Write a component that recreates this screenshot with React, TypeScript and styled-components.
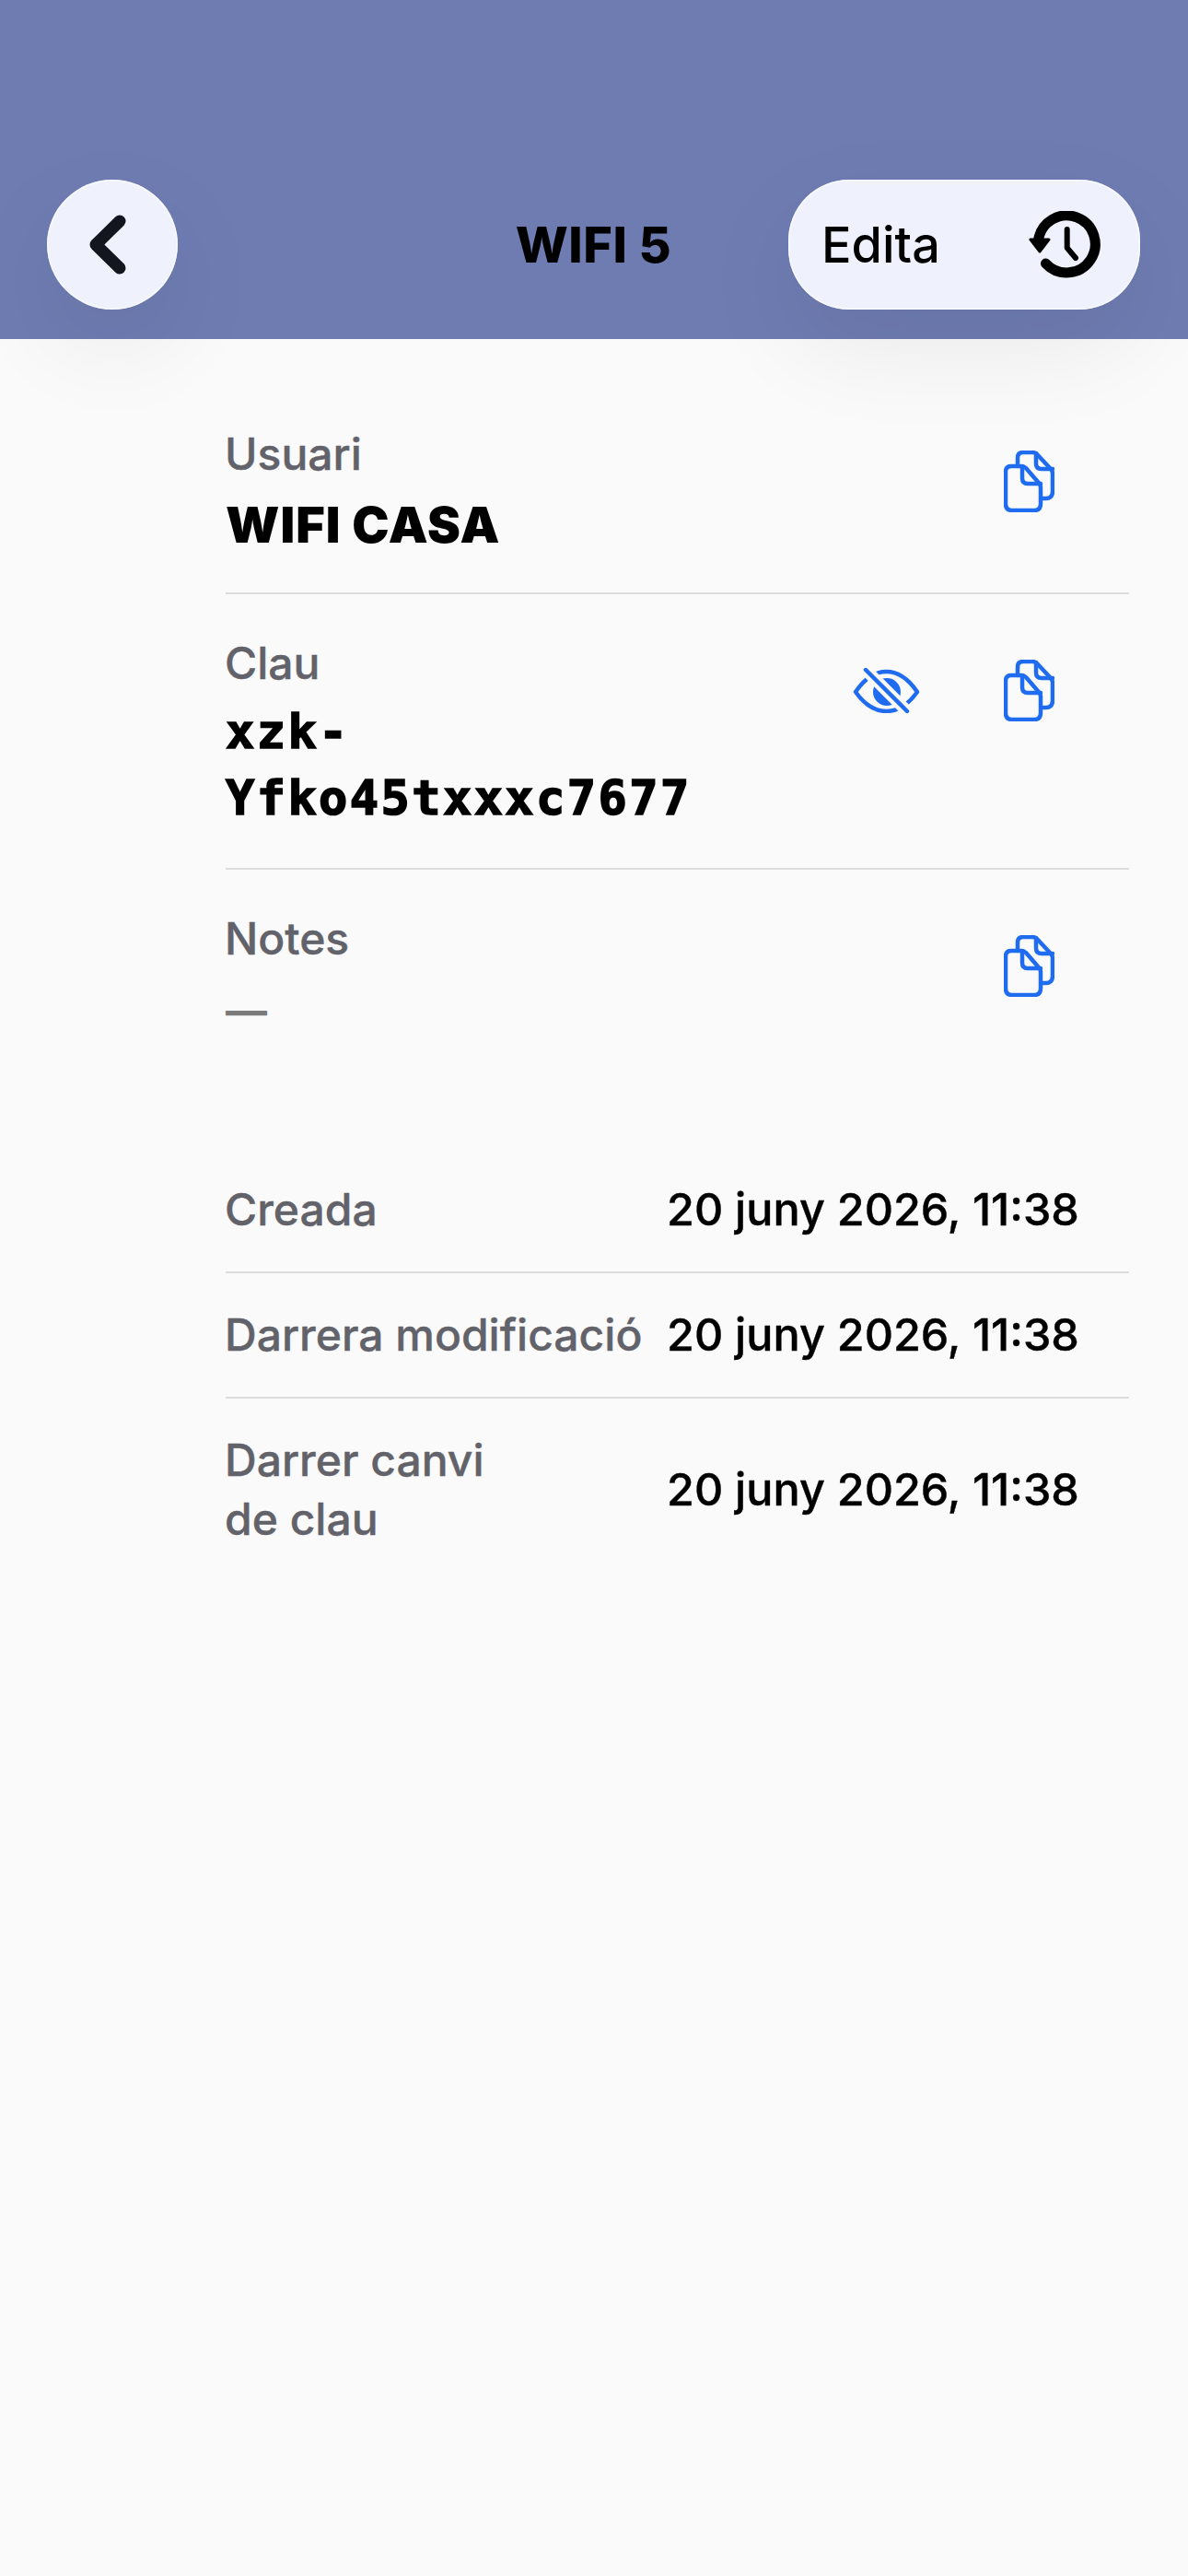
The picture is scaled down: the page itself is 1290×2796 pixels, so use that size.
import styled, { createGlobalStyle } from 'styled-components'

const GlobalStyle = createGlobalStyle`
    html, body {
        margin: 0;
        padding: 0;
        background: #fafafa;
    }
    * {
        box-sizing: border-box;
    }
`

function BackIcon() {
    return (
        <BackSvg viewBox="0 0 40 65">
            <path d="M33 7 L7 32.5 L33 58" />
        </BackSvg>
    )
}

function HistoryIcon() {
    return (
        <HistorySvg viewBox="0 0 80 74">
            <path d="M10.5 32 A31 31 0 1 1 18.5 57" className="ring" />
            <path d="M2 31 L22 31 L12 44 Z" className="arrow" />
            <path d="M41.7 20 V40 L51 51" className="hands" />
        </HistorySvg>
    )
}

function CopyIcon() {
    return (
        <IconSvg viewBox="0 0 55 67" width="55" height="67">
            <path d="M15 17 V8 Q15 2 21 2 H31 Q34 2 36 4 L50 19 Q53 22 53 25 V44 Q53 52 46 52 H41" />
            <path d="M35 3 V14 Q35 20 41 20 H53" />
            <path d="M8 17 H19 Q22 17 24 19 L37 34 Q40 37 40 40 V58 Q40 65 33 65 H9 Q2 65 2 58 V23 Q2 17 8 17 Z" />
            <path d="M20 17 V30 Q20 36 26 36 H40" />
        </IconSvg>
    )
}

function EyeOffIcon() {
    return (
        <IconSvg viewBox="0 0 73 49" width="73" height="49">
            <path d="M3 26 Q18 4 36.5 4 Q55 4 70 26 Q55 47 36.5 47 Q18 47 3 26 Z" />
            <circle cx="37" cy="26" r="15" className="solid" />
            <path d="M14 2 L59 47" className="gap" />
            <path d="M14 2 L59 47" />
        </IconSvg>
    )
}

export default function App() {
    return (
        <>
            <GlobalStyle />
            <Page>
                <Header>
                    <BackButton>
                        <BackIcon />
                    </BackButton>
                    <Title>WIFI 5</Title>
                    <EditButton>
                        <span>Edita</span>
                        <HistoryIcon />
                    </EditButton>
                </Header>

                <Content>
                    <FieldRow>
                        <div>
                            <FieldLabel>Usuari</FieldLabel>
                            <UserValue>WIFI CASA</UserValue>
                        </div>
                        <Actions>
                            <CopyIcon />
                        </Actions>
                    </FieldRow>

                    <FieldRow>
                        <div>
                            <FieldLabel>Clau</FieldLabel>
                            <SecretValue>
                                xzk-
                                <br />
                                Yfko45txxxc7677
                            </SecretValue>
                        </div>
                        <Actions>
                            <EyeOffIcon />
                            <CopyIcon />
                        </Actions>
                    </FieldRow>

                    <FieldRow $last>
                        <div>
                            <FieldLabel>Notes</FieldLabel>
                            <EmptyValue>—</EmptyValue>
                        </div>
                        <Actions>
                            <CopyIcon />
                        </Actions>
                    </FieldRow>

                    <DatesTable>
                        <DateRow>
                            <FieldLabel>Creada</FieldLabel>
                            <DateValue>20 juny 2026, 11:38</DateValue>
                        </DateRow>
                        <DateRow>
                            <FieldLabel>Darrera modificació</FieldLabel>
                            <DateValue>20 juny 2026, 11:38</DateValue>
                        </DateRow>
                        <DateRow $last>
                            <FieldLabel>
                                Darrer canvi
                                <br />
                                de clau
                            </FieldLabel>
                            <DateValue>20 juny 2026, 11:38</DateValue>
                        </DateRow>
                    </DatesTable>
                </Content>
            </Page>
        </>
    )
}

const Page = styled.div`
    width: 1290px;
    height: 2796px;
    overflow: hidden;
    background: #fafafa;
    font-family: Inter, 'Liberation Sans', sans-serif;
    color: #000;
`
const Header = styled.header`
    height: 368px;
    padding: 195px 52px 0 51px;
    display: grid;
    grid-template-columns: 1fr auto 1fr;
    align-items: start;
    background: #6f7cb2;
`
const BackButton = styled.div`
    width: 142px;
    height: 141px;
    border-radius: 50%;
    display: flex;
    align-items: center;
    justify-content: center;
    padding-right: 11px;
    background: #eff2fc;
    box-shadow: inset 0 0 0 1.5px rgba(255, 255, 255, 0.6),
        0 40px 110px rgba(0, 0, 0, 0.07);
`
const BackSvg = styled.svg`
    width: 40px;
    height: 65px;
    fill: none;
    stroke: #14161f;
    stroke-width: 13;
    stroke-linecap: round;
    stroke-linejoin: round;
`
const Title = styled.h1`
    margin: 0;
    height: 141px;
    line-height: 141px;
    font-size: 54px;
    font-weight: 800;
    letter-spacing: 0.5px;
`
const EditButton = styled.div`
    justify-self: end;
    width: 382px;
    height: 141px;
    padding: 0 41px 0 36px;
    border-radius: 66px;
    display: flex;
    align-items: center;
    justify-content: space-between;
    background: #eff2fc;
    box-shadow: inset 0 0 0 1.5px rgba(255, 255, 255, 0.6),
        0 40px 110px rgba(0, 0, 0, 0.07);
    font-size: 54px;
    font-weight: 500;
`
const HistorySvg = styled.svg`
    width: 80px;
    height: 74px;
    fill: none;
    stroke: #000;
    .ring {
        stroke-width: 11;
        stroke-linecap: round;
    }
    .arrow {
        fill: #000;
        stroke-width: 3;
        stroke-linejoin: round;
    }
    .hands {
        stroke-width: 6;
        stroke-linecap: round;
        stroke-linejoin: round;
    }
`
const Content = styled.main`
    padding: 50px 64px 0 245px;
`
const FieldRow = styled.section<{ $last?: boolean }>`
    display: flex;
    align-items: flex-start;
    justify-content: space-between;
    padding: 43px 81px 41px 0;
    border-bottom: ${(p) => (p.$last ? 'none' : '2px solid #dcdcdc')};
`
const FieldLabel = styled.div`
    margin-left: -1px;
    font-size: 48px;
    font-weight: 500;
    line-height: 64px;
    color: #62626a;
    white-space: nowrap;
    -webkit-text-stroke: 0.4px #62626a;
`
const UserValue = styled.div`
    margin-top: 9px;
    margin-bottom: -4px;
    font-size: 54px;
    font-weight: 900;
    line-height: 72px;
    letter-spacing: 1px;
`
const SecretValue = styled.div`
    margin-top: 6px;
    margin-bottom: -1px;
    font-family: 'DejaVu Sans Mono', 'Liberation Mono', monospace;
    font-size: 52px;
    font-weight: 700;
    line-height: 72px;
    letter-spacing: 2.4px;
    -webkit-text-stroke: 1.6px #000;
`
const EmptyValue = styled.div`
    margin-top: 10px;
    font-size: 45px;
    font-weight: 700;
    line-height: 72px;
    color: #7a7a7a;
`
const Actions = styled.div`
    display: flex;
    align-items: center;
    gap: 91px;
    padding-top: 28px;
`
const IconSvg = styled.svg`
    fill: none;
    stroke: #1f6cf0;
    stroke-width: 4.5;
    stroke-linecap: round;
    stroke-linejoin: round;
    .solid {
        fill: #1f6cf0;
        stroke: none;
    }
    .gap {
        stroke: #fafafa;
        stroke-width: 13;
    }
`
const DatesTable = styled.div`
    margin-top: 72px;
`
const DateRow = styled.div<{ $last?: boolean }>`
    display: grid;
    grid-template-columns: 479px auto;
    align-items: center;
    padding: 35px 0;
    border-bottom: ${(p) => (p.$last ? 'none' : '2px solid #dcdcdc')};
`
const DateValue = styled.div`
    font-size: 48.5px;
    font-weight: 500;
    line-height: 64px;
    white-space: nowrap;
    -webkit-text-stroke: 0.4px #000;
`
